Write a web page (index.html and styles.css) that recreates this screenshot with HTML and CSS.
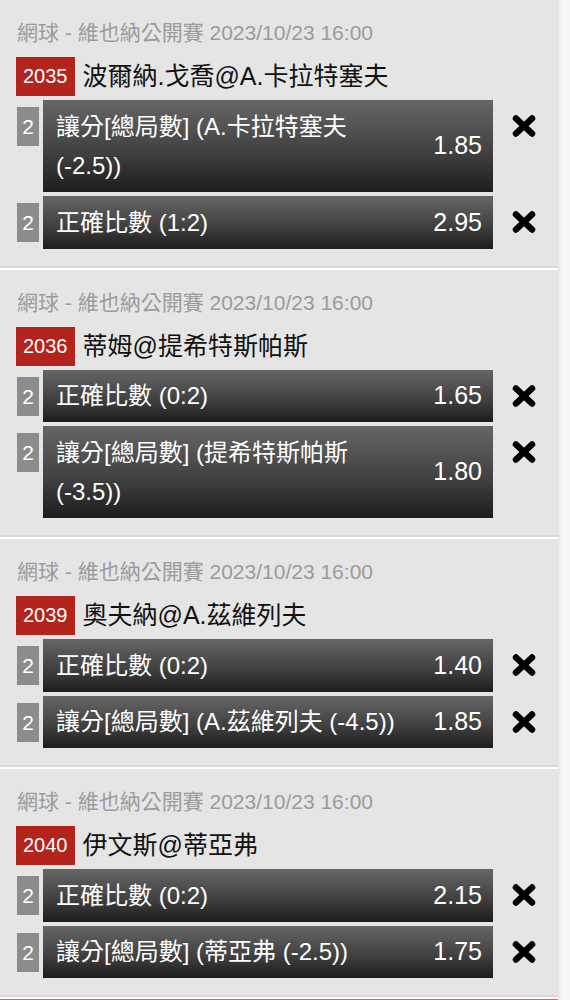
FILE: index.html
```html
<!DOCTYPE HTML>
<html lang="zh-Hant">
  <head>
    <title>投注單</title>
    <meta charset="utf-8">
    <link rel="stylesheet" href="styles.css">
  </head>
  <body>

  <div id="slip">

    <div class="match">
      <div class="league">網球 - 維也納公開賽 2023/10/23 16:00</div>
      <div class="teams"><span class="code">2035</span>波爾納.戈喬@A.卡拉特塞夫</div>
      <div class="bet">
        <span class="leg">2</span>
        <div class="pick"><span class="desc">讓分[總局數] (A.卡拉特塞夫 (-2.5))</span><span class="odds">1.85</span></div>
        <span class="remove"><svg viewBox="0 0 24 22" width="24" height="22"><path d="M4 3.5 L20 18.5 M20 3.5 L4 18.5"/></svg></span>
      </div>
      <div class="bet">
        <span class="leg">2</span>
        <div class="pick"><span class="desc">正確比數 (1:2)</span><span class="odds">2.95</span></div>
        <span class="remove"><svg viewBox="0 0 24 22" width="24" height="22"><path d="M4 3.5 L20 18.5 M20 3.5 L4 18.5"/></svg></span>
      </div>
    </div>

    <div class="match">
      <div class="league">網球 - 維也納公開賽 2023/10/23 16:00</div>
      <div class="teams"><span class="code">2036</span>蒂姆@提希特斯帕斯</div>
      <div class="bet">
        <span class="leg">2</span>
        <div class="pick"><span class="desc">正確比數 (0:2)</span><span class="odds">1.65</span></div>
        <span class="remove"><svg viewBox="0 0 24 22" width="24" height="22"><path d="M4 3.5 L20 18.5 M20 3.5 L4 18.5"/></svg></span>
      </div>
      <div class="bet">
        <span class="leg">2</span>
        <div class="pick"><span class="desc">讓分[總局數] (提希特斯帕斯 (-3.5))</span><span class="odds">1.80</span></div>
        <span class="remove"><svg viewBox="0 0 24 22" width="24" height="22"><path d="M4 3.5 L20 18.5 M20 3.5 L4 18.5"/></svg></span>
      </div>
    </div>

    <div class="match">
      <div class="league">網球 - 維也納公開賽 2023/10/23 16:00</div>
      <div class="teams"><span class="code">2039</span>奧夫納@A.茲維列夫</div>
      <div class="bet">
        <span class="leg">2</span>
        <div class="pick"><span class="desc">正確比數 (0:2)</span><span class="odds">1.40</span></div>
        <span class="remove"><svg viewBox="0 0 24 22" width="24" height="22"><path d="M4 3.5 L20 18.5 M20 3.5 L4 18.5"/></svg></span>
      </div>
      <div class="bet">
        <span class="leg">2</span>
        <div class="pick"><span class="desc">讓分[總局數] (A.茲維列夫 (-4.5))</span><span class="odds">1.85</span></div>
        <span class="remove"><svg viewBox="0 0 24 22" width="24" height="22"><path d="M4 3.5 L20 18.5 M20 3.5 L4 18.5"/></svg></span>
      </div>
    </div>

    <div class="match">
      <div class="league">網球 - 維也納公開賽 2023/10/23 16:00</div>
      <div class="teams"><span class="code">2040</span>伊文斯@蒂亞弗</div>
      <div class="bet">
        <span class="leg">2</span>
        <div class="pick"><span class="desc">正確比數 (0:2)</span><span class="odds">2.15</span></div>
        <span class="remove"><svg viewBox="0 0 24 22" width="24" height="22"><path d="M4 3.5 L20 18.5 M20 3.5 L4 18.5"/></svg></span>
      </div>
      <div class="bet">
        <span class="leg">2</span>
        <div class="pick"><span class="desc">讓分[總局數] (蒂亞弗 (-2.5))</span><span class="odds">1.75</span></div>
        <span class="remove"><svg viewBox="0 0 24 22" width="24" height="22"><path d="M4 3.5 L20 18.5 M20 3.5 L4 18.5"/></svg></span>
      </div>
    </div>

    <div class="next"></div>

  </div>

  </body>
</html>
```

FILE: styles.css
```css
html {
  height: 100%;
}
body {
  margin: 0;
  padding: 0;
  background: #f8f8f8;
  color: #111;
  font-family: "Liberation Sans", "Noto Sans CJK TC", sans-serif;
  height: 100%;
}

#slip {
  width: 558px;
  background-color: #e5e5e5;
  box-shadow: 1px 0 3px rgba(0,0,0,0.12);
}

.match {
  padding: 20px 0 17px 0;
  border-bottom: 2px solid #d8d8d8;
}
.match + .match {
  border-top: 2px solid #fff;
}

.league {
  padding-left: 17px;
  font-size: 21px;
  line-height: 26px;
  color: #9b9b9b;
}

.teams {
  display: flex;
  align-items: center;
  gap: 8px;
  margin: 11px 0 4px 16px;
  font-size: 25px;
  line-height: 39px;
  color: #111;
}

.code {
  background-color: #b2241c;
  color: #fff;
  font-size: 20px;
  padding: 0 7px;
  line-height: 39px;
}

.bet {
  display: flex;
  align-items: flex-start;
  padding-left: 17px;
}
.bet + .bet {
  margin-top: 4px;
}

.leg {
  width: 22px;
  height: 39px;
  margin: 7px 4px 0 0;
  background-color: #8c8c8c;
  color: #fff;
  font-size: 21px;
  line-height: 39px;
  text-align: center;
}

.pick {
  flex: 1;
  display: flex;
  align-items: center;
  gap: 16px;
  padding: 6.5px 11px 6.5px 13px;
  background: linear-gradient(to bottom, #666 0%, #3e3e3e 60%, #1c1c1c 100%);
  color: #fff;
}

.desc {
  flex: 1;
  font-size: 24px;
  line-height: 39.5px;
}

.odds {
  font-size: 25px;
  line-height: 39.5px;
}

.remove {
  width: 65px;
  padding: 15px 0 0 19px;
  box-sizing: border-box;
}
.remove svg {
  display: block;
}
.remove path {
  stroke: #000;
  stroke-width: 6.5;
  stroke-linecap: round;
  fill: none;
}

.next {
  height: 8px;
  border-top: 2px solid #fff;
  background-color: #e2685e;
}
```
